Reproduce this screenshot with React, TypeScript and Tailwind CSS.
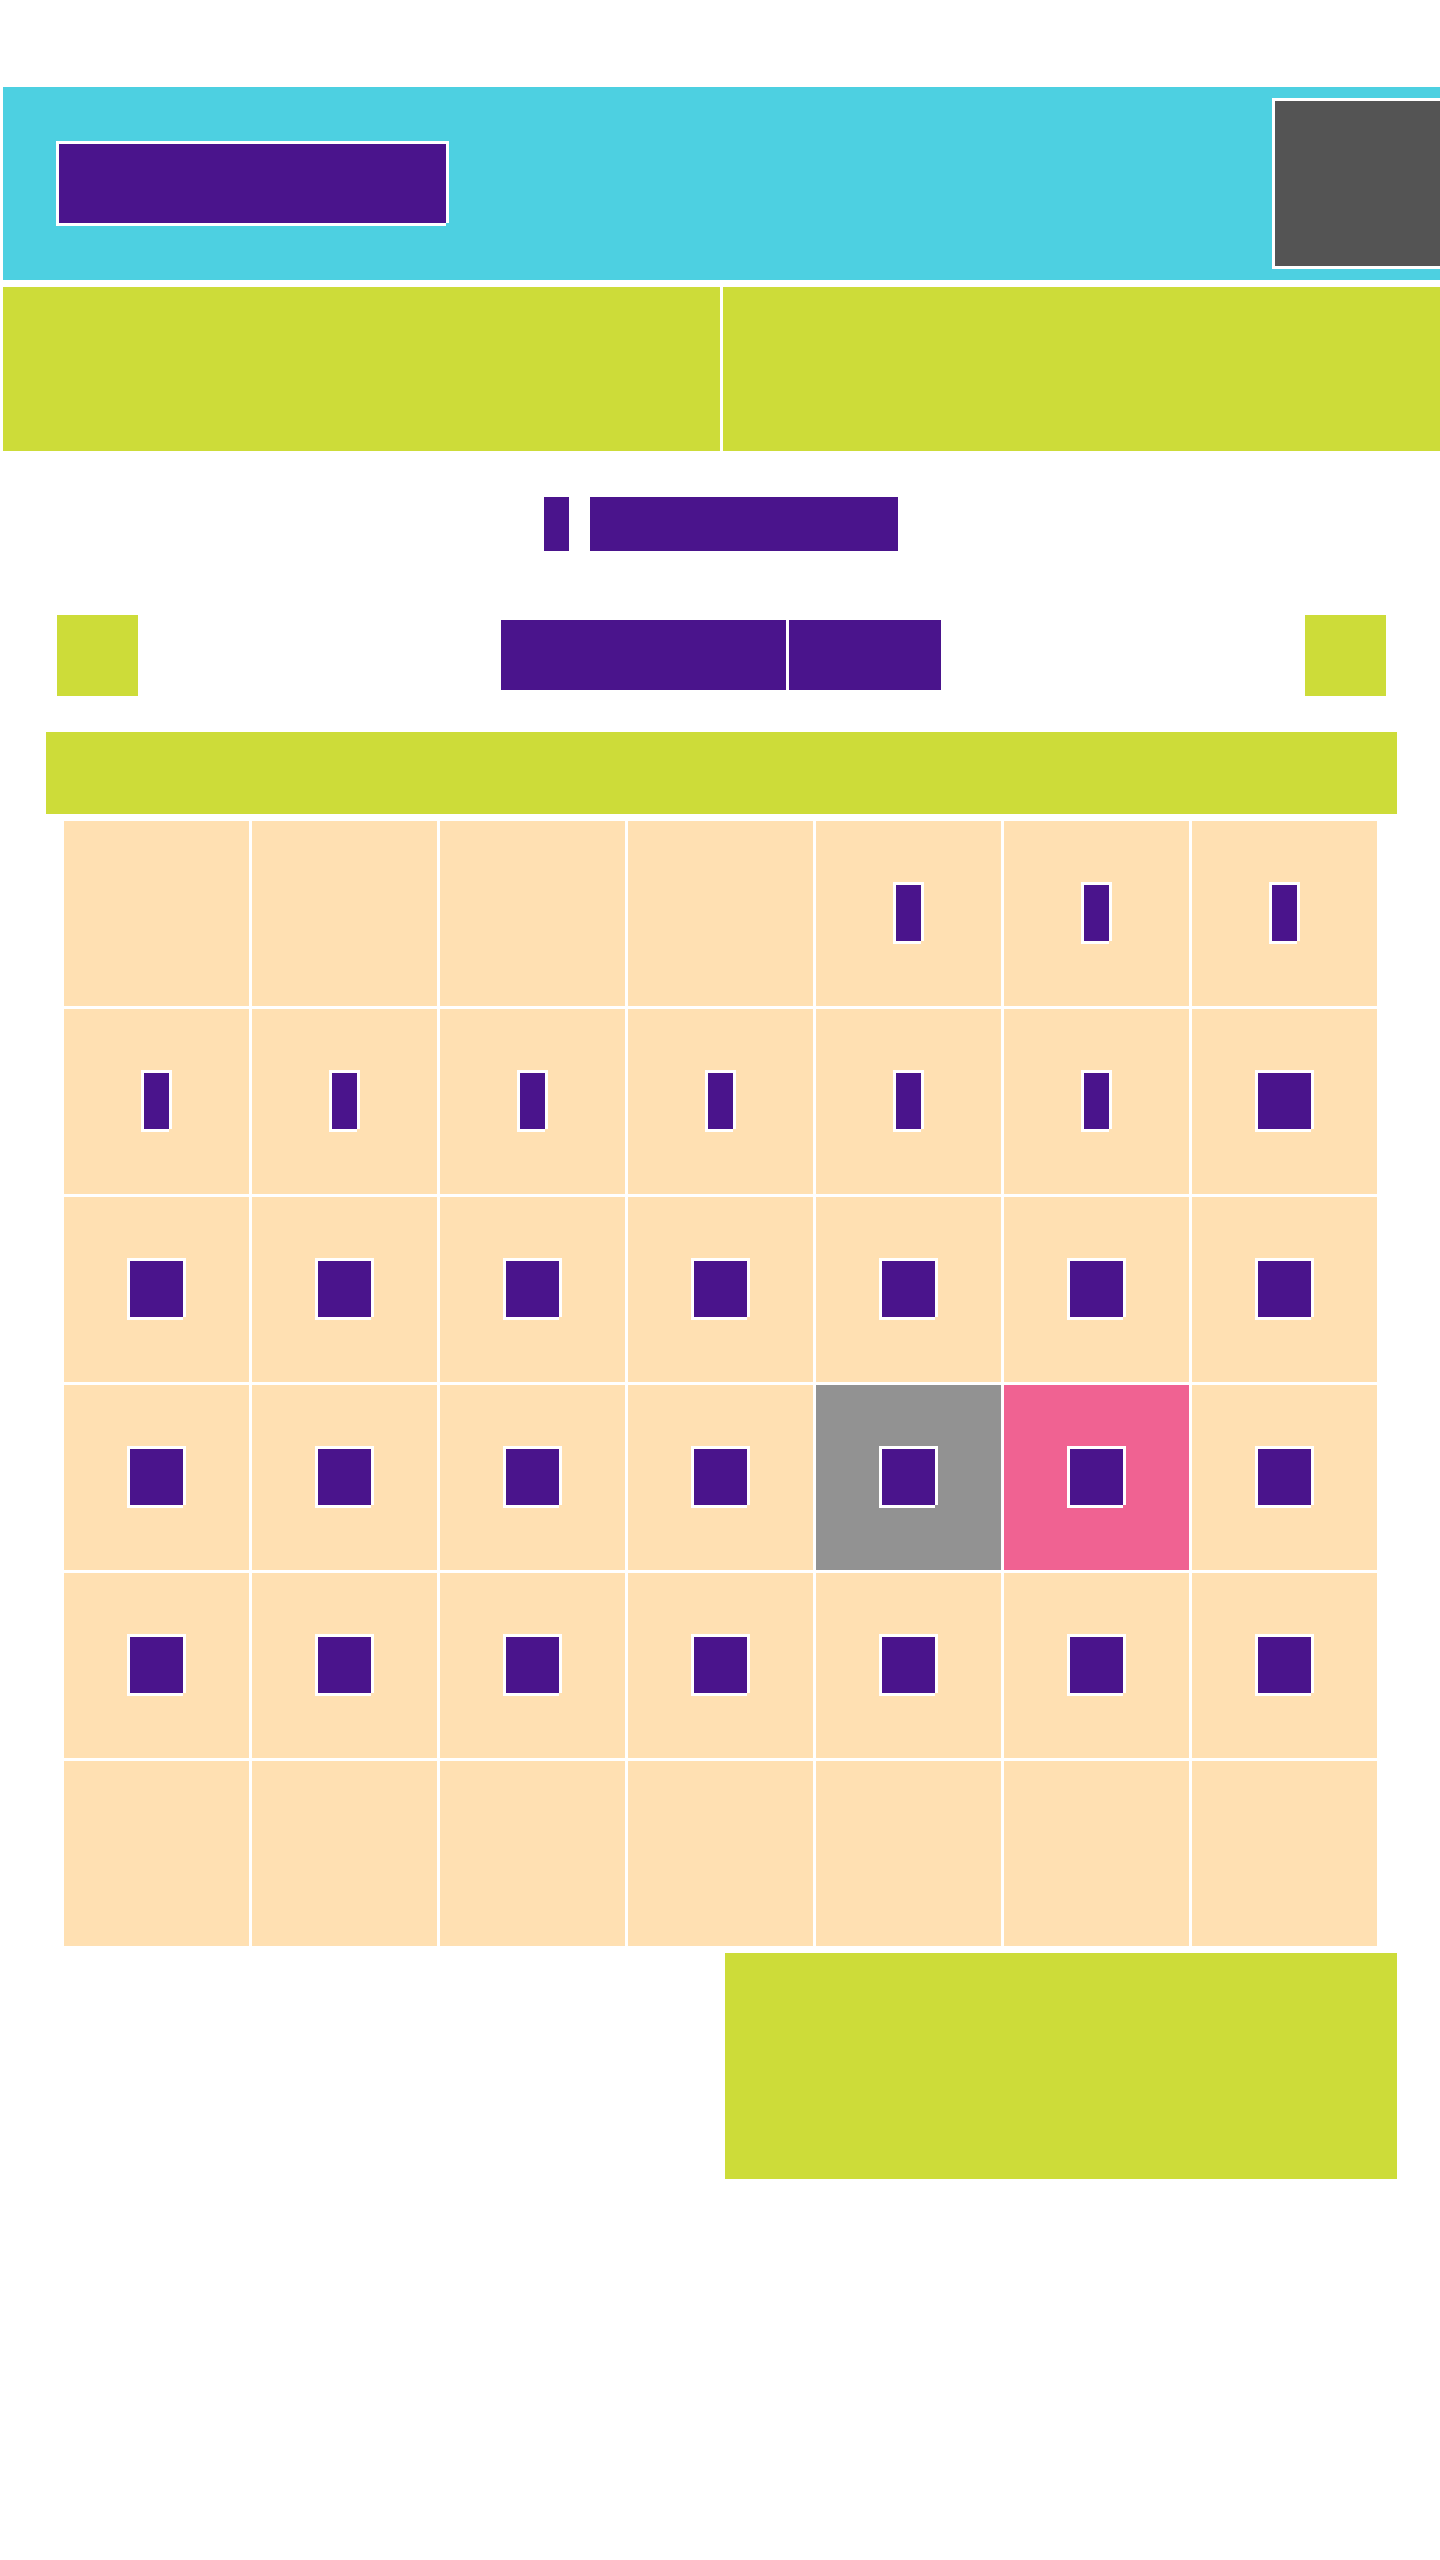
type Tone = "plain" | "today" | "selected";

const outline =
  "shadow-[-3px_-3px_0_0_#fff,3px_-3px_0_0_#fff,-3px_3px_0_0_#fff,3px_0_0_0_#fff,0_3px_0_0_#fff]";

const tones: Record<Tone, string> = {
  plain: "bg-[#ffe0b2]",
  today: "bg-[#929292]",
  selected: "bg-[#f06292]",
};

const FIRST_WEEKDAY = 4;
const DAYS_IN_MONTH = 31;
const cells = Array.from({ length: 42 }, (_, i) => {
  const day = i - FIRST_WEEKDAY + 1;
  return day >= 1 && day <= DAYS_IN_MONTH ? day : null;
});

function toneOf(day: number | null): Tone {
  if (day === 22) return "today";
  if (day === 23) return "selected";
  return "plain";
}

function DayCell({ day }: { day: number | null }) {
  const tone = tones[toneOf(day)];
  if (day === null) return <div className={`aspect-square ${tone}`} />;
  return (
    <button
      type="button"
      aria-label={`Day ${day}`}
      className={`flex aspect-square items-start justify-center pt-16 ${tone}`}
    >
      <span
        className={`h-14 bg-[#4a148c] ${day < 10 ? "w-[25px]" : "w-[53px]"} ${outline}`}
      />
    </button>
  );
}

export default function App() {
  return (
    <main className="min-h-screen overflow-x-hidden bg-white pt-[87px] pl-[3px]">
      <header className="flex items-center justify-between bg-[#4dd0e1] py-[14px] pl-14">
        <h1
          aria-label="Calendar"
          className={`h-[79px] w-[387px] bg-[#4a148c] ${outline}`}
        />
        <button
          type="button"
          aria-label="Menu"
          className={`size-[165px] bg-[#545454] ${outline}`}
        />
      </header>

      <nav className="mt-[7px] grid grid-cols-2 gap-[3px]">
        <button type="button" aria-label="First tab" className="h-[164px] bg-[#cddc39]" />
        <button type="button" aria-label="Second tab" className="h-[164px] bg-[#cddc39]" />
      </nav>

      <div className="mt-[46px] flex justify-center gap-[21px] pr-px">
        <span className="h-[54px] w-[25px] bg-[#4a148c]" />
        <span className="h-[54px] w-[308px] bg-[#4a148c]" />
      </div>

      <div className="mt-16 flex items-start justify-between pr-[54px] pl-[54px]">
        <button type="button" aria-label="Previous month" className="size-[81px] bg-[#cddc39]" />
        <h2 aria-label="Month and year" className="flex gap-[3px] pt-[5px] pr-px">
          <span className="h-[70px] w-[285px] bg-[#4a148c]" />
          <span className="h-[70px] w-[152px] bg-[#4a148c]" />
        </h2>
        <button type="button" aria-label="Next month" className="size-[81px] bg-[#cddc39]" />
      </div>

      <section aria-label="Month" className="mt-9 mr-[43px] ml-[43px]">
        <div className="h-[82px] bg-[#cddc39]" />
        <div className="mt-[7px] mr-5 ml-[18px] grid grid-cols-7 gap-[3px]">
          {cells.map((day, i) => (
            <DayCell key={i} day={day} />
          ))}
        </div>
        <div className="mt-[7px] grid grid-cols-2 gap-[7px]">
          <button
            type="button"
            aria-label="Confirm"
            className="col-start-2 h-[226px] bg-[#cddc39]"
          />
        </div>
      </section>
    </main>
  );
}
